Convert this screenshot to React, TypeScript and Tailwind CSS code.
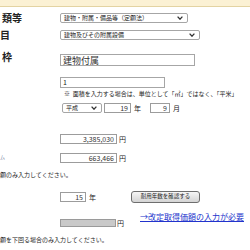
const jp = "font-['Noto_Sans_CJK_JP','Noto_Sans_CJK_SC',sans-serif]";

const Chevron = () => (
    <svg width="6" height="4" viewBox="0 0 6 4" className="shrink-0">
        <path d="M0.6 0.6 L3 3.2 L5.4 0.6" fill="none" stroke="#333" strokeWidth="1.3" />
    </svg>
);

interface SelectProps {
    text: string;
    width: string;
}

const Select = ({ text, width }: SelectProps) => (
    <div className={`${width} h-[10px] flex items-center justify-between border border-[#a6a6a6] rounded-[2px] bg-white pl-[3px] pr-[4px] text-[6px] leading-none text-[#222] overflow-hidden whitespace-nowrap`}>
        <span>{text}</span>
        <Chevron />
    </div>
);

const NumBox = ({ value, width }: { value: string; width: string }) => (
    <div className={`${width} h-[10px] border border-[#9c9c9c] bg-white flex items-center justify-end pr-[2px] text-[7px] leading-none text-[#333]`}>
        {value}
    </div>
);

export default function App() {
    return (
        <div className={`w-[250px] h-[250px] overflow-hidden bg-white ${jp} text-[#222]`}>
            <div className="h-[7px] bg-[#fbf1d4] border-b border-[#e3d3a2]" />

            {/* 資産の種類 */}
            <div className="flex mt-[6px] h-[10px] items-center">
                <div className="w-[60px] shrink-0">
                    <span className="block ml-[2px] text-[10px] font-bold leading-none whitespace-nowrap">類等</span>
                </div>
                <Select text="建物・附属・備品等（定額法）" width="w-[128px]" />
            </div>

            <div className="flex mt-[7px] h-[10px] items-center">
                <div className="w-[60px] shrink-0">
                    <span className="block ml-[0px] text-[10px] font-bold leading-none whitespace-nowrap">目</span>
                </div>
                <Select text="建物及びその附属設備" width="w-[140px]" />
            </div>

            <div className="flex mt-[14px] h-[12px] items-start">
                <div className="w-[60px] shrink-0">
                    <span className="block ml-[2px] mt-[-2px] text-[10px] font-bold leading-none whitespace-nowrap">枠</span>
                </div>
                <div className="w-[135px] h-[12px] border border-[#a6a6a6] bg-white flex items-center pl-[2px] text-[9px] leading-none text-[#333]">
                    建物付属
                </div>
            </div>

            <div className="flex mt-[11px] h-[11px]">
                <div className="w-[60px] shrink-0" />
                <div className="w-[105px] h-[11px] border border-[#a6a6a6] bg-white flex items-center pl-[2px] text-[7px] leading-none">
                    1
                </div>
            </div>
            <div className="flex mt-[2px] h-[7px] items-center">
                <div className="w-[64px] shrink-0" />
                <div className="text-[6px] leading-none whitespace-nowrap text-[#222]">
                    ※&nbsp;&nbsp;面積を入力する場合は、単位として「㎡」ではなく、「平米」
                </div>
            </div>

            <div className="flex mt-[6px] h-[10px] items-center">
                <div className="w-[62px] shrink-0" />
                <Select text="平成" width="w-[40px]" />
                <div className="ml-[2px]">
                    <NumBox value="19" width="w-[27px]" />
                </div>
                <span className="ml-[3px] text-[7px] leading-none">年</span>
                <div className="ml-[9px]">
                    <NumBox value="9" width="w-[20px]" />
                </div>
                <span className="ml-[3px] text-[7px] leading-none">月</span>
            </div>

            <div className="flex mt-[21px] h-[10px] items-center">
                <div className="w-[60px] shrink-0" />
                <NumBox value="3,385,030" width="w-[57px]" />
                <span className="ml-[2px] text-[7px] leading-none">円</span>
            </div>

            <div className="flex mt-[9px] h-[10px] items-center">
                <div className="w-[60px] shrink-0">
                    <span className="block ml-[0px] mt-[-4px] text-[5px] text-[#6b7a99] leading-none">ム</span>
                </div>
                <NumBox value="663,466" width="w-[57px]" />
                <span className="ml-[2px] text-[7px] leading-none">円</span>
            </div>

            <div className="mt-[9px] h-[8px] text-[6px] leading-none whitespace-nowrap">
                額のみ入力してください。
            </div>

            <div className="flex mt-[11px] h-[12px] items-center">
                <div className="w-[60px] shrink-0" />
                <NumBox value="15" width="w-[26px]" />
                <span className="ml-[3px] text-[7px] leading-none">年</span>
                <button className="ml-[35px] w-[69px] h-[12px] rounded-[3px] border border-[#6e6e6e] bg-gradient-to-b from-[#f6f6f6] to-[#d4d4d4] text-[5.5px] leading-none text-[#222] flex items-center justify-center whitespace-nowrap">
                    耐用年数を確認する
                </button>
            </div>

            <div className="flex mt-[9px] h-[15px]">
                <div className="w-[60px] shrink-0" />
                <div className="flex items-end">
                    <div className="w-[56px] h-[8px] border border-[#9a9a9a] bg-[#c9c9c9]" />
                    <span className="ml-[1px] text-[7px] leading-none">円</span>
                </div>
                <a className="ml-[16px] mt-[1px] text-[8px] leading-none text-[#2233cc] underline whitespace-nowrap">
                    →改定取得価額の入力が必要
                </a>
            </div>

            <div className="mt-[10px] h-[7px] text-[6px] leading-none whitespace-nowrap">
                額を下回る場合のみ入力してください。
            </div>
        </div>
    );
}
